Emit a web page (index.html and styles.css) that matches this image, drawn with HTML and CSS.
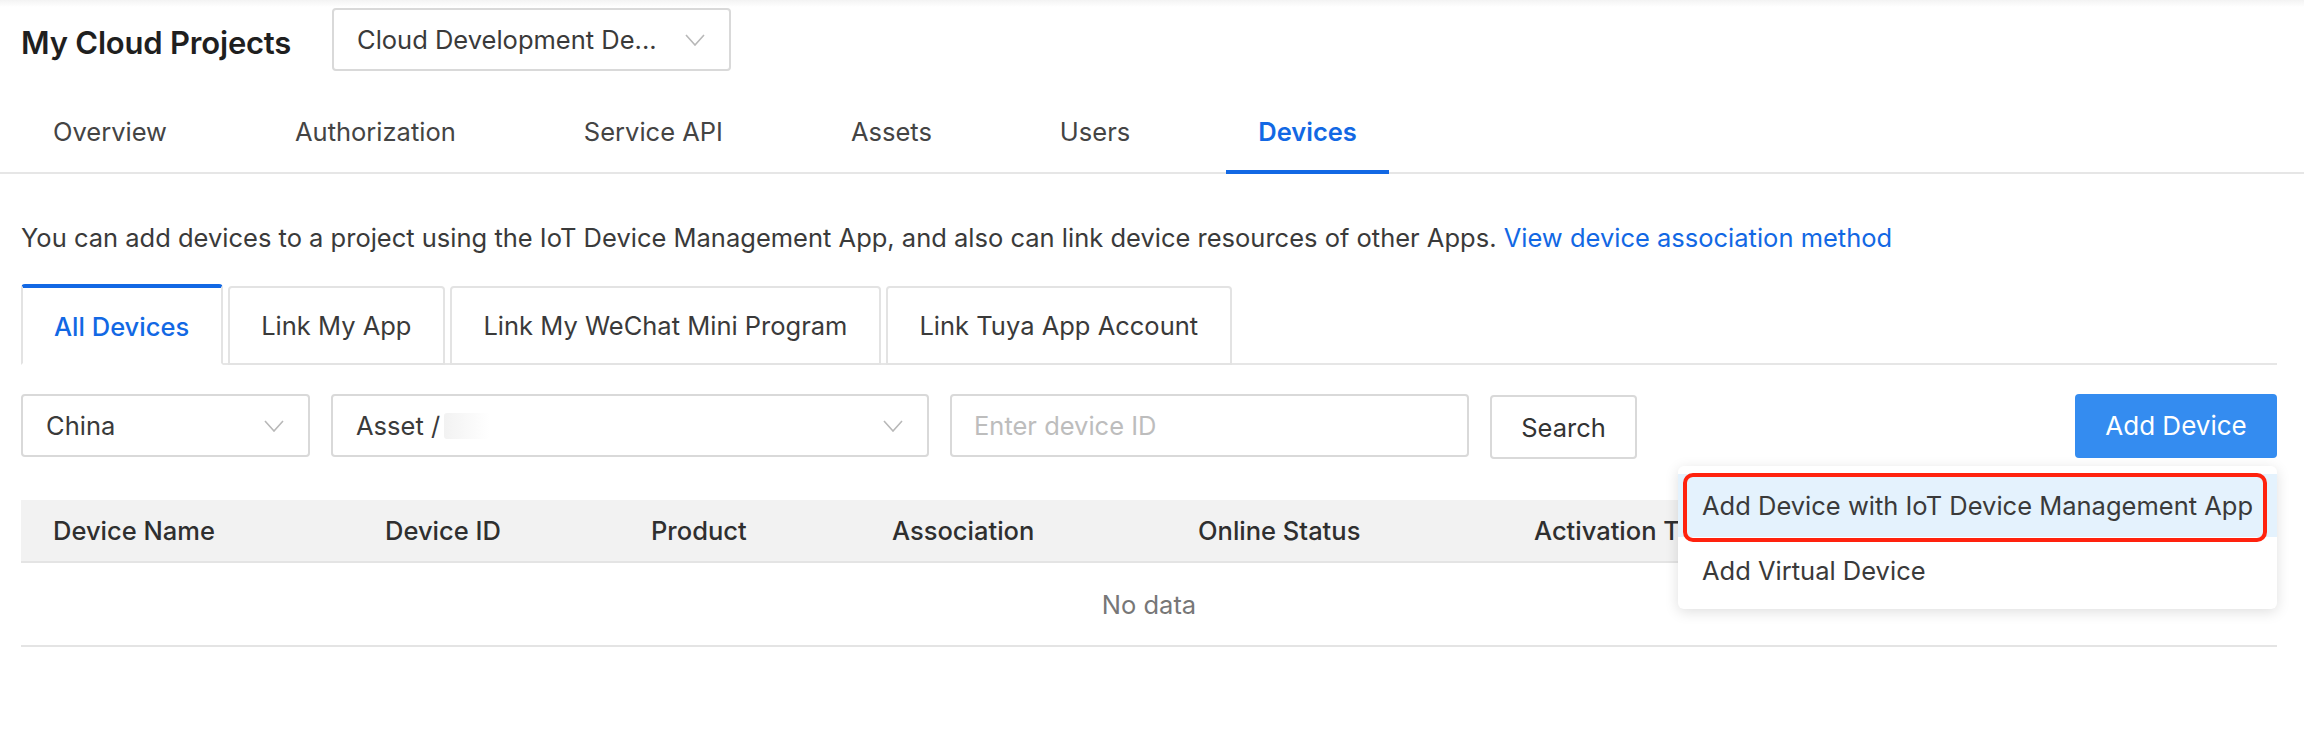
FILE: index.html
```html
<!DOCTYPE html>
<html>
<head>
<meta charset="utf-8">
<title>My Cloud Projects - Devices</title>
<link rel="stylesheet" href="styles.css">
</head>
<body>
<div class="page">
  <header class="title-row">
    <h1 class="title">My Cloud Projects</h1>
    <div class="select project-select">
      <span class="select-text">Cloud Development De...</span>
      <svg class="chev" viewBox="0 0 20 12" width="20" height="12"><path d="M1 1 L10 11 L19 1" fill="none" stroke="#b8b8b8" stroke-width="1.6"/></svg>
    </div>
  </header>

  <nav class="nav">
    <a class="nav-tab">Overview</a>
    <a class="nav-tab">Authorization</a>
    <a class="nav-tab">Service API</a>
    <a class="nav-tab">Assets</a>
    <a class="nav-tab">Users</a>
    <a class="nav-tab active">Devices</a>
  </nav>

  <main class="content">
    <p class="desc">You can add devices to a project using the IoT Device Management App, and also can link device resources of other Apps. <a class="link">View device association method</a></p>

    <div class="card-tabs">
      <div class="card-tab active">All Devices</div>
      <div class="card-tab">Link My App</div>
      <div class="card-tab">Link My WeChat Mini Program</div>
      <div class="card-tab">Link Tuya App Account</div>
    </div>

    <div class="filters">
      <div class="select region-select">
        <span class="select-text">China</span>
        <svg class="chev" viewBox="0 0 20 12" width="20" height="12"><path d="M1 1 L10 11 L19 1" fill="none" stroke="#b8b8b8" stroke-width="1.6"/></svg>
      </div>
      <div class="select asset-select">
        <span class="select-text">Asset /<span class="redacted"></span></span>
        <svg class="chev" viewBox="0 0 20 12" width="20" height="12"><path d="M1 1 L10 11 L19 1" fill="none" stroke="#b8b8b8" stroke-width="1.6"/></svg>
      </div>
      <div class="input"><span class="placeholder">Enter device ID</span></div>
      <button class="btn">Search</button>
      <div class="add-wrap">
        <button class="btn btn-primary">Add Device</button>
        <div class="menu">
          <div class="menu-item hover">Add Device with IoT Device Management App</div>
          <div class="menu-item">Add Virtual Device</div>
          <div class="annot"></div>
        </div>
      </div>
    </div>

    <div class="table">
      <div class="thead">
        <div class="th">Device Name</div>
        <div class="th">Device ID</div>
        <div class="th">Product</div>
        <div class="th">Association</div>
        <div class="th">Online Status</div>
        <div class="th">Activation Time</div>
      </div>
      <div class="empty">No data</div>
    </div>
  </main>
</div>
</body>
</html>
```

FILE: styles.css
```css
* { box-sizing: border-box; }
html, body { margin: 0; padding: 0; }
body {
  width: 2304px;
  height: 736px;
  overflow: hidden;
  background: linear-gradient(#f3f3f3 0, #ffffff 7px) no-repeat, #fff;
  font-family: Inter, "Liberation Sans", Arial, sans-serif;
  font-size: 25.5px;
  color: #333;
}
.page { padding-top: 8px; }

.title-row {
  display: flex;
  align-items: center;
  padding-left: 21px;
  height: 63px;
}
.title {
  margin: 0;
  font-size: 31px;
  font-weight: 600;
  color: #1f1f1f;
  width: 270px;
  white-space: nowrap;
  padding-top: 5px;
  letter-spacing: -0.2px;
}
.select {
  display: flex;
  align-items: center;
  justify-content: space-between;
  height: 63px;
  border: 2px solid #d9d9d9;
  border-radius: 4px;
  background: #fff;
  color: #3a3a3a;
}
.project-select {
  margin-left: 41px;
  width: 399px;
  padding: 0 24px 0 23px;
}
.chev { display: block; }

.nav {
  display: flex;
  margin-top: 23px;
  padding-left: 21px;
  gap: 64px;
  border-bottom: 2px solid #e6e6e6;
}
.nav-tab {
  display: block;
  padding: 0 32px;
  line-height: 76px;
  margin-bottom: -2px;
  border-bottom: 4px solid transparent;
  color: #444;
}
.nav-tab.active {
  color: #1268e4;
  font-weight: 600;
  border-bottom-color: #1268e4;
}

.content { padding: 0 27px 0 21px; }
.desc {
  margin: 46px 0 0;
  line-height: 36px;
  color: #3a3a3a;
}
.link { color: #1268e4; }

.card-tabs {
  display: flex;
  align-items: flex-end;
  gap: 5px;
  margin-top: 28px;
  border-bottom: 2px solid #e6e6e6;
  height: 81px;
}
.card-tab {
  height: 79px;
  margin-bottom: -2px;
  padding: 0 32px 0 31px;
  display: flex;
  align-items: center;
  border: 2px solid #e3e3e3;
  border-radius: 4px 4px 0 0;
  background: #fff;
  color: #3a3a3a;
}
.card-tab.active {
  height: 81px;
  border-top: 4px solid #1268e4;
  border-bottom-color: #fff;
  color: #1268e4;
  font-weight: 500;
  padding-top: 2px;
}

.filters {
  display: flex;
  align-items: center;
  margin-top: 29px;
  height: 63px;
}
.region-select { width: 289px; padding: 0 24px 0 23px; }
.asset-select { width: 598px; margin-left: 21px; padding: 0 24px 0 23px; }
.redacted {
  display: inline-block;
  width: 46px;
  height: 26px;
  margin-left: 4px;
  vertical-align: -4px;
  background: linear-gradient(90deg, #f2f2f2, #fafafa 60%, #fff);
  border-radius: 3px;
}
.input {
  width: 519px;
  height: 63px;
  margin-left: 21px;
  border: 2px solid #d9d9d9;
  border-radius: 4px;
  display: flex;
  align-items: center;
  padding-left: 22px;
}
.placeholder { color: #bdbdbd; }
.btn {
  font-family: inherit;
  font-size: 25.5px;
  height: 64px;
  margin-left: 21px;
  width: 147px;
  border: 2px solid #d9d9d9;
  border-radius: 4px;
  background: #fff;
  color: #333;
  padding: 0;
  margin-top: 3px;
}
.add-wrap {
  margin-left: auto;
  position: relative;
}
.btn-primary {
  display: block;
  margin: 0;
  width: 202px;
  height: 64px;
  border: none;
  background: #348cf0;
  color: #fff;
  font-size: 26px;
}
.menu {
  position: absolute;
  right: 0;
  top: 72px;
  width: 599px;
  padding: 8px 0 9px;
  background: #fff;
  border-radius: 6px;
  box-shadow: 0 3px 14px rgba(0, 0, 0, 0.13);
  z-index: 10;
}
.menu-item {
  height: 63px;
  line-height: 63px;
  padding-left: 24px;
  color: #3a3a3a;
  white-space: nowrap;
}
.menu-item.hover { background: #e4f2fd; }
.menu-item + .menu-item { line-height: 68px; }
.annot {
  position: absolute;
  left: 5px;
  right: 10px;
  top: 7px;
  height: 69px;
  border: 4px solid #ff220e;
  border-radius: 10px;
}

.table { margin-top: 43px; }
.thead {
  display: grid;
  grid-template-columns: 332px 266px 241px 306px 336px 1fr;
  height: 63px;
  background: #f2f2f2;
  border-bottom: 2px solid #e4e4e4;
  align-items: center;
}
.th {
  padding-left: 32px;
  font-weight: 500;
  color: #2f2f2f;
  white-space: nowrap;
}
.empty {
  height: 84px;
  display: flex;
  align-items: center;
  justify-content: center;
  color: #777;
  border-bottom: 2px solid #e4e4e4;
}
```
